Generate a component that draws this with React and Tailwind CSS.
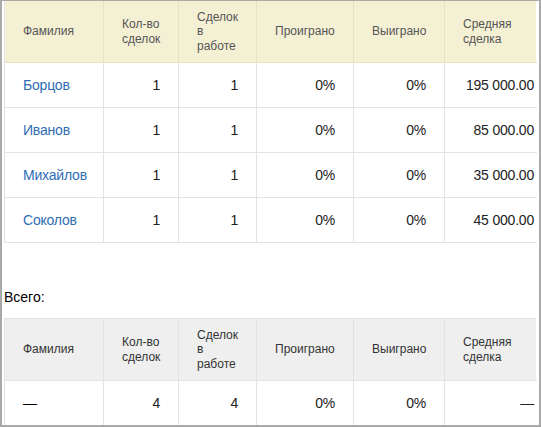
import React from "react";

const cols = "grid grid-cols-[99px_75px_78px_97px_91px_92px]";

const headers = ["Фамилия", "Кол-во сделок", "Сделок в работе", "Проиграно", "Выиграно", "Средняя сделка"];

const rows = [
  { name: "Борцов", deals: 1, active: 1, lost: "0%", won: "0%", avg: "195 000.00" },
  { name: "Иванов", deals: 1, active: 1, lost: "0%", won: "0%", avg: "85 000.00" },
  { name: "Михайлов", deals: 1, active: 1, lost: "0%", won: "0%", avg: "35 000.00" },
  { name: "Соколов", deals: 1, active: 1, lost: "0%", won: "0%", avg: "45 000.00" },
];

function Header({ bg, line, text }) {
  return (
    <div className={`${cols} ${bg} text-[12px] leading-[14.5px] ${text}`}>
      {headers.map((h, i) => (
        <div
          key={i}
          className={`h-[62px] flex items-center pl-[18px] pr-[18px] border-b ${line} ${i < 5 ? "border-r" : ""}`}
        >
          {h}
        </div>
      ))}
    </div>
  );
}

function Row({ r, link }) {
  const cell = "h-[45px] flex items-center border-b border-[#e3e3e3]";
  return (
    <div className={`${cols} text-[14px] tracking-[-0.2px]`}>
      <div className={`${cell} border-r pl-[18px] ${link ? "text-[#2f6db5]" : "text-black"}`}>{r.name}</div>
      <div className={`${cell} border-r justify-end pr-[18px]`}>{r.deals}</div>
      <div className={`${cell} border-r justify-end pr-[18px]`}>{r.active}</div>
      <div className={`${cell} border-r justify-end pr-[18px]`}>{r.lost}</div>
      <div className={`${cell} border-r justify-end pr-[18px]`}>{r.won}</div>
      <div className={`${cell} justify-end pr-[3px]`}>{r.avg}</div>
    </div>
  );
}

export default function App() {
  return (
    <div
      className="w-[541px] h-[427px] overflow-hidden bg-white border-l-2 border-r-2 border-t border-b-2 border-[#a9a9a9] text-[#222]"
      style={{ fontFamily: '"Liberation Sans", Arial, sans-serif' }}
    >
      <div className="pl-[2px] w-[534px]">
        <div className="border-l border-[#e3e3e3]">
          <Header bg="bg-[#f4f0d4]" line="border-[#e6e2c6]" text="text-[#555]" />
          {rows.map((r, i) => (
            <Row key={i} r={r} link />
          ))}
        </div>

        <div className="pt-[46px] pb-[13px] text-[14px] leading-[16px] text-black">Всего:</div>

        <div className="border-l border-t border-[#e3e3e3]">
          <Header bg="bg-[#efefef]" line="border-[#e3e3e3]" text="text-[#333]" />
          <Row r={{ name: "—", deals: 4, active: 4, lost: "0%", won: "0%", avg: "—" }} />
        </div>
      </div>
    </div>
  );
}
